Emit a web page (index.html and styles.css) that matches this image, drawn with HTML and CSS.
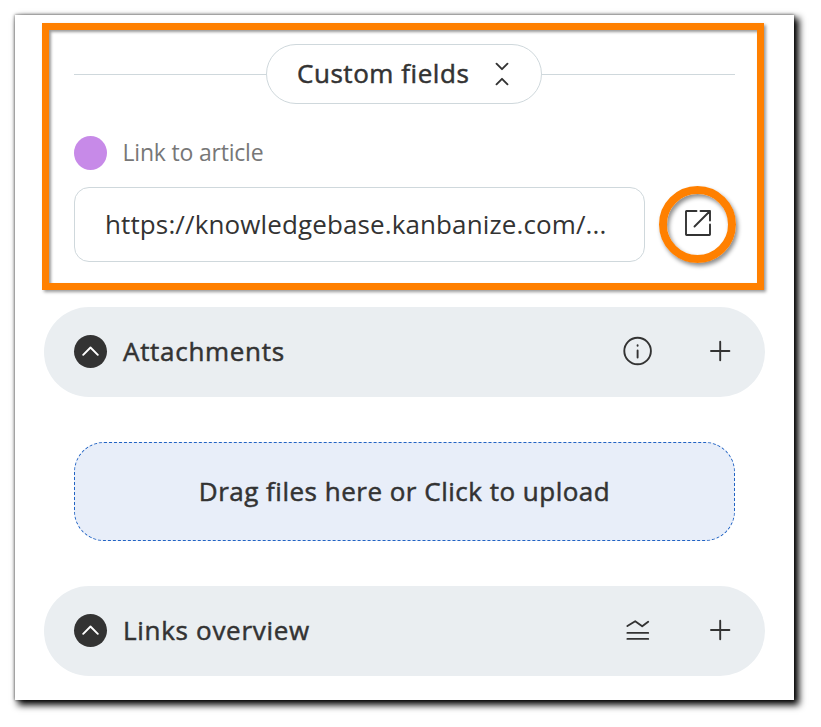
FILE: index.html
```
<!DOCTYPE html>
<html lang="en">
	<head>
		<meta charset="utf-8">
		<meta name="viewport" content="width=device-width">
		<title>Card details</title>
		<link rel="stylesheet" href="styles.css">
	</head>
	<body>
		<main class="panel">
			<section class="custom-fields">
				<div class="divider">
					<button class="toggle" type="button">
						<span>Custom fields</span>
						<svg class="toggle-icon" width="14" height="24" viewBox="0 0 14 24"><path d="M1.5 1.7 7 7.2l5.5-5.5M1.5 22.3 7 16.8l5.5 5.5" /></svg>
					</button>
				</div>
				<div class="field-label">
					<span class="dot"></span>
					<span class="label-text">Link to article</span>
				</div>
				<div class="field-row">
					<div class="link-input">https://knowledgebase.kanbanize.com/...</div>
					<a class="open-link" href="#" aria-label="Open link">
						<svg width="28" height="28" viewBox="0 0 28 28"><path d="M12.5 2H2.5Q2 2 2 2.500V25.500Q2 26 2.500 26H25.500Q26 26 26 25.500V15.500M16.500 2H26V11.500M26 2 10.500 17.500" /></svg>
					</a>
				</div>
			</section>

			<section class="bar">
				<span class="collapse"><svg width="17" height="10" viewBox="0 0 17 10"><path d="M1.200 8.800 8.500 1.500l7.300 7.300" /></svg></span>
				<h2>Attachments</h2>
				<svg class="icon" width="30" height="30" viewBox="0 0 30 30"><circle cx="14.600" cy="15" r="13.300" /><path d="M14.600 14.500v7M14.600 9.200v.6" /></svg>
				<svg class="icon" width="30" height="30" viewBox="0 0 30 30"><path d="M6 15h18.400M15.200 5.800v18.400" /></svg>
			</section>

			<div class="dropzone">Drag files here or Click to upload</div>

			<section class="bar">
				<span class="collapse"><svg width="17" height="10" viewBox="0 0 17 10"><path d="M1.200 8.800 8.500 1.500l7.300 7.300" /></svg></span>
				<h2>Links overview</h2>
				<svg class="icon" width="30" height="30" viewBox="0 0 30 30"><path d="M4.400 11 12.200 6.200l7 5 6-4.500M4.400 17.900h20.800M4.400 23.900h20.800" /></svg>
				<svg class="icon" width="30" height="30" viewBox="0 0 30 30"><path d="M6 15h18.400M15.200 5.800v18.400" /></svg>
			</section>
		</main>
	</body>
</html>
```

FILE: styles.css
```
* {
	box-sizing: border-box;
}

body {
	margin: 0;
	padding: 15px;
	background-color: white;
	font-family: 'Open Sans', 'Noto Sans', sans-serif;
	font-size: 26px;
	color: #333;
}

svg {
	display: block;
	fill: none;
	stroke: #333;
	stroke-width: 1.9;
	stroke-linecap: round;
	stroke-linejoin: round;
}

.panel {
	width: 779px;
	height: 685px;
	padding: 8px 29px 0 27px;
	background-color: white;
	box-shadow: 4px 4px 7px 1px black, 0 0 3px rgba(0, 0, 0, 0.6);
}

/* Custom fields */

.custom-fields {
	width: 722px;
	height: 267px;
	padding: 14px 20px 0 25px;
	border: 7px solid #ff8000;
	box-shadow: 2px 2px 3px rgba(0, 0, 0, 0.4), inset 2px 2px 3px rgba(0, 0, 0, 0.4);
}

.divider {
	display: flex;
	align-items: center;
	width: 661px;
	height: 60px;
}

.divider::before,
.divider::after {
	content: '';
	width: 192px;
	height: 1px;
	background-color: #cfd8dc;
}

.divider::after {
	width: 193px;
}

.toggle {
	display: flex;
	align-items: center;
	justify-content: space-between;
	width: 276px;
	height: 60px;
	padding: 0 32px 2px 30px;
	border: 1px solid #cfd8dc;
	border-radius: 30px;
	background-color: white;
	font: inherit;
	letter-spacing: 0.55px;
	color: #333;
	white-space: nowrap;
	-webkit-text-stroke: 0.5px #333;
}

.toggle-icon {
	margin-top: 2px;
}

.field-label {
	display: flex;
	align-items: center;
	gap: 15.5px;
	height: 34px;
	margin-top: 32px;
	font-size: 23px;
	letter-spacing: -0.2px;
	color: #777;
}

.label-text {
	padding-bottom: 2px;
}

.dot {
	width: 33px;
	height: 34px;
	border-radius: 50%;
	background-color: #c78ae8;
}

.field-row {
	display: flex;
	gap: 14px;
	margin-top: 17px;
}

.link-input {
	width: 571px;
	height: 75px;
	padding-left: 30px;
	border: 1px solid #cfd8dc;
	border-radius: 15px;
	letter-spacing: 0.12px;
	line-height: 73px;
	white-space: nowrap;
}

.open-link {
	display: flex;
	align-items: center;
	justify-content: center;
	width: 77px;
	height: 77px;
	margin-top: -1px;
	padding-bottom: 3px;
	border: 8px solid #ff8000;
	border-radius: 50%;
	box-shadow: 2px 3px 4px rgba(0, 0, 0, 0.45), inset 2px 3px 4px rgba(0, 0, 0, 0.45);
}

/* Section bars */

.bar {
	display: flex;
	align-items: center;
	width: 721px;
	height: 90px;
	margin: 17px 0 0 2px;
	padding: 0 30px 2px;
	border-radius: 45px;
	background-color: #eaeef1;
}

.collapse {
	display: flex;
	align-items: center;
	justify-content: center;
	width: 33px;
	height: 33px;
	margin-right: 16px;
	border-radius: 50%;
	background-color: #333;
}

.collapse svg {
	stroke: white;
}

.bar h2 {
	flex: 1;
	margin: 0;
	font-size: 26px;
	font-weight: 400;
	letter-spacing: 0.7px;
	-webkit-text-stroke: 0.5px #333;
}

.icon + .icon {
	margin-left: 52px;
}

.dropzone {
	width: 661px;
	height: 99px;
	margin: 45px 0 45px 32px;
	border: 1px dashed #2163c4;
	border-radius: 30px;
	background-color: #e8eef9;
	letter-spacing: 0.5px;
	line-height: 97px;
	text-align: center;
	-webkit-text-stroke: 0.5px #333;
}

.dropzone + .bar {
	margin-top: 0;
}
```
